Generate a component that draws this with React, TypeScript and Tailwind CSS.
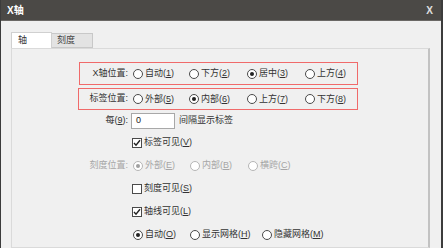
import React from "react";

const FONT = { fontFamily: '"Liberation Sans", "Noto Sans CJK SC", sans-serif' };

function Radio({ checked = false, disabled = false }: { checked?: boolean; disabled?: boolean }) {
  return (
    <span
      className={`flex h-[10px] w-[10px] shrink-0 items-center justify-center rounded-full border bg-white ${
        disabled ? "border-[#b5b5b5]" : "border-[#4a4a4a]"
      }`}
    >
      {checked && (
        <span className={`h-[4px] w-[4px] rounded-full ${disabled ? "bg-[#a0a0a0]" : "bg-[#222]"}`} />
      )}
    </span>
  );
}

function Check({ checked = false }: { checked?: boolean }) {
  return (
    <span className="flex h-[10px] w-[10px] shrink-0 items-center justify-center border border-[#4a4a4a] bg-white">
      {checked && (
        <svg width="8" height="8" viewBox="0 0 8 8">
          <path d="M1 4 L3 6.2 L7 1.2" fill="none" stroke="#222" strokeWidth="1.4" />
        </svg>
      )}
    </span>
  );
}

// label like 自动(1) with underlined mnemonic
function Lbl({ text, k, disabled = false }: { text: string; k: string; disabled?: boolean }) {
  return (
    <span className={`whitespace-nowrap text-[9px] leading-none ${disabled ? "text-[#a6a6a6]" : "text-[#333]"}`}>
      {text}(<span className="underline">{k}</span>)
    </span>
  );
}

function Opt({
  w,
  text,
  k,
  checked,
  disabled,
}: {
  w: string;
  text: string;
  k: string;
  checked?: boolean;
  disabled?: boolean;
}) {
  return (
    <div className={`flex items-center gap-[2px] ${w}`}>
      <Radio checked={checked} disabled={disabled} />
      <Lbl text={text} k={k} disabled={disabled} />
    </div>
  );
}

export default function App() {
  return (
    <div className="h-[248px] w-[443px] overflow-hidden bg-[#3c3c3c] pl-[1px] pr-[2px]" style={FONT}>
      {/* title bar */}
      <div className="flex h-[21px] items-center justify-between border-b border-[#6a6865] bg-[#4b4946] pl-[6px] pr-[8px] text-white">
        <span className="text-[10px] font-bold">X轴</span>
        <span className="text-[10px] font-bold text-[#e0e0e0]">X</span>
      </div>

      <div className="h-[227px] bg-[#f0f0f0] pl-[10px] pr-[11px] pt-[12px]">
        {/* tabs */}
        <div className="flex h-[15px] items-end">
          <div className="relative z-10 flex h-[16px] w-[41px] items-center border border-b-0 border-[#d0d0d0] bg-white pl-[6px] text-[9px] text-[#333]">
            轴
          </div>
          <div className="flex h-[15px] w-[41px] items-center border border-l-0 border-[#c8c8c8] bg-[#e3e3e3] pl-[5px] text-[9px] text-[#444]">
            刻度
          </div>
        </div>

        {/* panel */}
        <div className="h-[200px] border border-r-2 border-[#dadada] border-r-[#c2c2c2] pt-[13px]">
          <div className="ml-[67px] flex h-[23px] w-[279px] items-center border border-[#f06a6a]">
            <span className="w-[48px] text-right text-[9px] text-[#333]">X轴位置:</span>
            <div className="ml-[5px] flex">
              <Opt w="w-[56px]" text="自动" k="1" />
              <Opt w="w-[58px]" text="下方" k="2" />
              <Opt w="w-[58px]" text="居中" k="3" checked />
              <Opt w="w-[50px]" text="上方" k="4" />
            </div>
          </div>

          <div className="ml-[66px] mt-[3px] flex h-[22px] w-[280px] items-center border border-[#f06a6a]">
            <span className="w-[49px] text-right text-[9px] text-[#333]">标签位置:</span>
            <div className="ml-[5px] flex">
              <Opt w="w-[56px]" text="外部" k="5" />
              <Opt w="w-[58px]" text="内部" k="6" checked />
              <Opt w="w-[58px]" text="上方" k="7" />
              <Opt w="w-[50px]" text="下方" k="8" />
            </div>
          </div>

          <div className="flex h-[21px] items-center">
            <span className="w-[116px] text-right text-[9px] text-[#333]">
              每(<span className="underline">9</span>):
            </span>
            <div className="ml-[3px] flex h-[16px] w-[44px] items-center border border-[#a8a8a8] bg-white pl-[4px] text-[9px] text-[#222]">
              0
            </div>
            <span className="ml-[4px] text-[9px] text-[#333]">间隔显示标签</span>
          </div>

          <div className="flex h-[23px] items-center pl-[120px]">
            <div className="flex items-center gap-[2px]">
              <Check checked />
              <Lbl text="标签可见" k="V" />
            </div>
          </div>

          <div className="flex h-[23px] items-center">
            <span className="w-[116px] text-right text-[9px] text-[#a6a6a6]">刻度位置:</span>
            <div className="ml-[5px] flex">
              <Opt w="w-[57px]" text="外部" k="E" checked disabled />
              <Opt w="w-[58px]" text="内部" k="B" disabled />
              <Opt w="w-[60px]" text="横跨" k="C" disabled />
            </div>
          </div>

          <div className="flex h-[23px] items-center pl-[120px]">
            <div className="flex items-center gap-[2px]">
              <Check />
              <Lbl text="刻度可见" k="S" />
            </div>
          </div>

          <div className="flex h-[23px] items-center pl-[120px]">
            <div className="flex items-center gap-[2px]">
              <Check checked />
              <Lbl text="轴线可见" k="L" />
            </div>
          </div>

          <div className="flex h-[23px] items-center pl-[121px]">
            <Opt w="w-[57px]" text="自动" k="O" checked />
            <Opt w="w-[72px]" text="显示网格" k="H" />
            <Opt w="w-[70px]" text="隐藏网格" k="M" />
          </div>
        </div>
      </div>
    </div>
  );
}
